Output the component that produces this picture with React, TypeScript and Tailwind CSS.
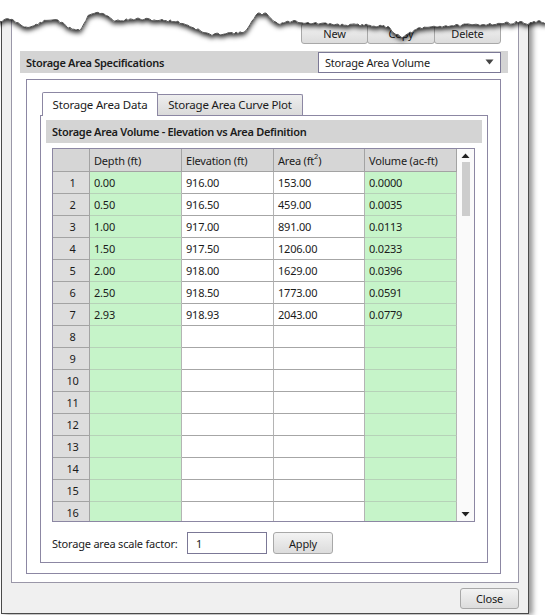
import React from 'react'

const ROWS: string[][] = [
  ['0.00', '916.00', '153.00', '0.0000'],
  ['0.50', '916.50', '459.00', '0.0035'],
  ['1.00', '917.00', '891.00', '0.0113'],
  ['1.50', '917.50', '1206.00', '0.0233'],
  ['2.00', '918.00', '1629.00', '0.0396'],
  ['2.50', '918.50', '1773.00', '0.0591'],
  ['2.93', '918.93', '2043.00', '0.0779'],
]

// rough outline of the torn paper edge at the top
const EDGE: [number, number][] = [
  [0, 21], [10, 19], [20, 24], [28, 28], [38, 24], [45, 21], [56, 19], [63, 24], [69, 28],
  [80, 30], [86, 20], [89, 14], [97, 12], [105, 15], [115, 21], [125, 20], [139, 19],
  [155, 20], [174, 21], [185, 24], [194, 28], [205, 33], [212, 35], [226, 33], [243, 33],
  [250, 25], [257, 14], [267, 14], [272, 19], [278, 24], [287, 22], [295, 21], [306, 23],
  [326, 24], [347, 25], [368, 25], [388, 27], [396, 34], [403, 37], [410, 33], [418, 29],
  [430, 27], [444, 26], [469, 25], [493, 24], [510, 23], [520, 22], [528, 24], [534, 22],
  [545, 22],
]

function edgePoints() {
  let seed = 11
  const rnd = () => {
    seed = (seed * 9301 + 49297) % 233280
    return seed / 233280
  }
  const pts: string[] = []
  for (let x = 0; x <= 545; x += 2) {
    let i = 0
    while (i < EDGE.length - 2 && EDGE[i + 1][0] < x) i++
    const [x0, y0] = EDGE[i]
    const [x1, y1] = EDGE[i + 1]
    const t = Math.min(1, Math.max(0, (x - x0) / (x1 - x0)))
    const y = y0 + (y1 - y0) * t + (rnd() - 0.5) * 2.4
    pts.push(`${x},${y.toFixed(1)}`)
  }
  return pts
}

function TornEdge() {
  const pts = edgePoints()
  return (
    <svg className="absolute left-0 top-0" width="545" height="60" viewBox="0 0 545 60">
      <defs>
        <filter id="torn" x="-5%" y="-20%" width="110%" height="160%">
          <feDropShadow dx="0" dy="3" stdDeviation="2.8" floodColor="#000" floodOpacity="0.85" />
        </filter>
      </defs>
      <path d={`M-5,-5 L-5,21 L${pts.join(' L')} L550,22 L550,-5 Z`} fill="#fff" filter="url(#torn)" />
      <polyline points={pts.join(' ')} fill="none" stroke="#4a4a4a" strokeWidth="0.9" />
    </svg>
  )
}

function WinButton({ label, className = '' }: { label: string; className?: string }) {
  return (
    <div
      className={`h-[21px] flex items-center justify-center border border-[#a8a8a8] rounded-[3px] bg-linear-to-b from-[#f3f3f3] to-[#dcdcdc] text-[#1b1b1b] ${className}`}
    >
      {label}
    </div>
  )
}

function DataTable() {
  const filler = Array.from({ length: 9 }, () => ['', '', '', ''])
  const all = [...ROWS, ...filler]

  return (
    <div className="ml-[11px] mt-[5px] w-[423px] h-[374px] border border-[#8c87a3] flex bg-white">
      <div className="w-[404px] flex flex-col">
        <div className="grid grid-cols-[37px_92px_92px_91px_92px] h-[23px] shrink-0">
          <div className="bg-[#d6d6d6] border-r border-b border-[#a3a3a3]" />
          {['Depth (ft)', 'Elevation (ft)'].map((h) => (
            <div key={h} className="bg-[#d6d6d6] border-r border-b border-[#a3a3a3] pl-[4px] flex items-center">
              {h}
            </div>
          ))}
          <div className="bg-[#d6d6d6] border-r border-b border-[#a3a3a3] pl-[4px] flex items-center">
            Area (ft<sup className="text-[7.5px] -top-[4px]">2</sup>)
          </div>
          <div className="bg-[#d6d6d6] border-r border-b border-[#a3a3a3] pl-[4px] flex items-center">
            Volume (ac-ft)
          </div>
        </div>
        <div className="flex-1 overflow-hidden">
          {all.map((r, i) => (
            <div key={i} className="grid grid-cols-[37px_92px_92px_91px_92px] h-[22px]">
              <div className="bg-[#dddddd] border-r border-b border-[#a3a3a3] flex items-center justify-center pl-[3px]">
                {i + 1}
              </div>
              <div className="bg-[#c6f4c9] border-r border-b border-r-[#b4b4b4] border-b-[#b6d2b8] pl-[4px] flex items-center">
                {r[0]}
              </div>
              <div className="bg-white border-r border-b border-r-[#b4b4b4] border-b-[#a6a6a6] pl-[4px] flex items-center">
                {r[1]}
              </div>
              <div className="bg-white border-r border-b border-r-[#b4b4b4] border-b-[#a6a6a6] pl-[4px] flex items-center">
                {r[2]}
              </div>
              <div className="bg-[#c6f4c9] border-r border-b border-r-[#b4b4b4] border-b-[#b6d2b8] pl-[4px] flex items-center">
                {r[3]}
              </div>
            </div>
          ))}
        </div>
      </div>
      <div className="w-[17px] bg-[#fafafa] flex flex-col items-center">
        <svg width="9" height="6" viewBox="0 0 9 6" className="mt-[4px]">
          <path d="M4.5 0.5 L8.5 5 L0.5 5 Z" fill="#222" />
        </svg>
        <div className="mt-[3px] w-[8px] h-[54px] bg-[#cdcdcd]" />
        <div className="flex-1" />
        <svg width="9" height="6" viewBox="0 0 9 6" className="mb-[4px]">
          <path d="M0.5 1 L8.5 1 L4.5 5.5 Z" fill="#222" />
        </svg>
      </div>
    </div>
  )
}

export default function App() {
  return (
    <div className="relative w-[545px] h-[615px] bg-white overflow-hidden font-['Segoe_UI','Noto_Sans',sans-serif] text-[11px] tracking-[-0.2px] text-[#1b1b1b] leading-none">
      <div className="ml-[1px] w-[528px] h-[614px] border-x border-b border-[#4a4a4a] bg-[#f0f0f0] px-[9px] flex flex-col shadow-[4px_1px_5px_rgba(0,0,0,0.4)]">
        <div className="h-[583px] shrink-0 border-x border-b border-[#9a97a8] bg-white flex flex-col">
          <div className="pt-[23px] pr-[17px] flex justify-end">
            <WinButton label="New" className="w-[67px]" />
            <WinButton label="Copy" className="w-[68px] -ml-px" />
            <WinButton label="Delete" className="w-[67px] -ml-px" />
          </div>

          <div className="ml-[8px] mt-[7px] w-[488px] h-[22px] bg-[#d4d4d4] flex items-center pr-[7px]">
            <span className="pl-[6px] font-semibold tracking-[-0.3px] flex-1">Storage Area Specifications</span>
            <div className="w-[183px] h-[21px] border border-[#7b7896] bg-white flex items-center pl-[6px] pr-[6px]">
              <span className="flex-1">Storage Area Volume</span>
              <svg width="9" height="6" viewBox="0 0 9 6">
                <path d="M0.5 0.5 L8.5 0.5 L4.5 5.5 Z" fill="#444" />
              </svg>
            </div>
          </div>

          <div className="ml-[14px] mt-[6px] w-[475px] h-[495px] border border-[#8c87a3] flex flex-col pl-[13px]">
            <div className="mt-[12px] h-[23px] flex items-end pl-[2px] shrink-0">
              <div className="w-[116px] h-[24px] -mb-px border border-b-0 border-[#8c87a3] rounded-t-[2px] bg-white relative z-10 flex items-center justify-center text-[11.5px]">
                Storage Area Data
              </div>
              <div className="w-[146px] h-[21px] -ml-px border border-b-0 border-[#8c87a3] rounded-t-[2px] bg-linear-to-b from-[#eeeeee] to-[#dadada] flex items-center justify-center text-[11.5px]">
                Storage Area Curve Plot
              </div>
            </div>
            <div className="w-[448px] h-[448px] border border-[#8c87a3] bg-white flex flex-col">
              <div className="mx-[5px] mt-[4px] h-[23px] bg-[#d4d4d4] flex items-center pl-[6px] font-semibold tracking-[-0.3px] shrink-0">
                Storage Area Volume - Elevation vs Area Definition
              </div>
              <DataTable />
              <div className="ml-[11px] mt-[10px] h-[22px] flex items-center">
                <span className="w-[135px] whitespace-nowrap">Storage area scale factor:</span>
                <div className="w-[80px] h-[22px] border border-[#7b7896] bg-white flex items-center pl-[8px]">1</div>
                <WinButton label="Apply" className="ml-[6px] w-[60px] h-[22px]" />
              </div>
            </div>
          </div>
        </div>

        <div className="mt-[5px] flex justify-end">
          <WinButton label="Close" className="w-[59px]" />
        </div>
      </div>
      <TornEdge />
    </div>
  )
}
